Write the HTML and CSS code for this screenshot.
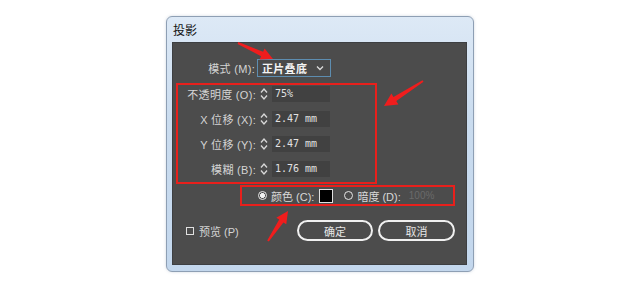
FILE: index.html
```html
<!DOCTYPE html>
<html lang="zh">
<head>
<meta charset="utf-8">
<link rel="stylesheet" href="styles.css">
</head>
<body>
<div class="window">
  <div class="title">投影</div>
  <div class="panel">
    <div class="mode-row">
      <span class="label mode-label">模式 (M):</span>
      <div class="select">
        <span class="select-text">正片叠底</span>
        <svg class="chev" width="8" height="6" viewBox="0 0 8 6"><path d="M1 1.5 L4 4.5 L7 1.5" fill="none" stroke="#dcdcdc" stroke-width="1.3"/></svg>
      </div>
    </div>
    <div class="box1">
      <div class="field">
        <span class="label">不透明度 (O):</span>
        <svg class="spin" width="10" height="16" viewBox="0 0 10 16"><path d="M2 6.5 L5 3 L8 6.5 M2 9.5 L5 13 L8 9.5" fill="none" stroke="#d8d8d8" stroke-width="1.3"/></svg>
        <div class="input">75%</div>
      </div>
      <div class="field">
        <span class="label">X 位移 (X):</span>
        <svg class="spin" width="10" height="16" viewBox="0 0 10 16"><path d="M2 6.5 L5 3 L8 6.5 M2 9.5 L5 13 L8 9.5" fill="none" stroke="#d8d8d8" stroke-width="1.3"/></svg>
        <div class="input">2.47 mm</div>
      </div>
      <div class="field">
        <span class="label">Y 位移 (Y):</span>
        <svg class="spin" width="10" height="16" viewBox="0 0 10 16"><path d="M2 6.5 L5 3 L8 6.5 M2 9.5 L5 13 L8 9.5" fill="none" stroke="#d8d8d8" stroke-width="1.3"/></svg>
        <div class="input">2.47 mm</div>
      </div>
      <div class="field">
        <span class="label">模糊 (B):</span>
        <svg class="spin" width="10" height="16" viewBox="0 0 10 16"><path d="M2 6.5 L5 3 L8 6.5 M2 9.5 L5 13 L8 9.5" fill="none" stroke="#d8d8d8" stroke-width="1.3"/></svg>
        <div class="input">1.76 mm</div>
      </div>
    </div>
    <div class="box2">
      <span class="radio on"></span>
      <span class="opt">颜色 (C):</span>
      <span class="swatch"></span>
      <span class="radio off"></span>
      <span class="opt">暗度 (D):</span>
      <span class="dim">100%</span>
    </div>
    <div class="bottom">
      <div class="check"><span class="cb"></span><span>预览 (P)</span></div>
      <div class="btn ok">确定</div>
      <div class="btn cancel">取消</div>
    </div>
  </div>
</div>
<svg class="arrows" width="620" height="289" viewBox="0 0 620 289">
  <polygon fill="#f01d1d" points="237.6,43.9 261.1,56.3 259.6,59.5 273,59 264.6,48.5 263.1,51.7 238.4,42.1"/>
  <polygon fill="#f01d1d" points="422.5,80.2 393.5,96.9 391.4,93.5 384,106 398.4,104.5 396.3,101.1 423.5,81.8"/>
  <polygon fill="#f01d1d" points="268.8,241.6 283.4,222.4 286.3,224.3 288,211 276.3,217.7 279.2,219.6 267.2,240.4"/>
</svg>
</body>
</html>
```

FILE: styles.css
```css
* { box-sizing: border-box; }
html, body { margin: 0; padding: 0; }
body {
  width: 620px;
  height: 289px;
  background: #ffffff;
  position: relative;
  overflow: hidden;
  font-family: "Liberation Sans", "Noto Sans CJK SC", sans-serif;
  font-size: 11px;
}
.window {
  margin: 16px 0 0 166px;
  width: 308px;
  height: 256px;
  border: 1px solid #8e9fb4;
  border-radius: 6px;
  background: linear-gradient(180deg, #dde9f6 0%, #cadcef 40%, #c3d7ed 100%);
  box-shadow: 0 0 3px rgba(120, 140, 170, 0.35);
}
.title {
  height: 25px;
  line-height: 25px;
  padding-left: 6px;
  font-size: 12px;
  color: #111;
  font-family: "Noto Sans CJK SC", sans-serif;
}
.panel {
  margin-left: 5px;
  width: 295px;
  height: 223px;
  background: #4c4c4c;
  border: 1px solid #3d3f42;
}
.label {
  color: #d4d4d4;
  text-align: right;
  white-space: nowrap;
  letter-spacing: 0.3px;
}
.mode-row {
  display: flex;
  align-items: center;
  padding-top: 16px;
  height: 34px;
}
.mode-label {
  width: 82px;
}
.select {
  margin-left: 2px;
  width: 74px;
  height: 18px;
  border: 1px solid #5d8db0;
  background: #4a4a4a;
  display: flex;
  align-items: center;
  padding-left: 4px;
}
.select-text {
  color: #f4f4f4;
  font-weight: bold;
  font-family: "Noto Sans CJK SC", sans-serif;
  font-size: 11px;
  letter-spacing: 0.3px;
}
.chev { margin-left: auto; margin-right: 6px; }
.box1 {
  margin-top: 6px;
  margin-left: 3px;
  width: 201px;
  height: 101px;
  border: 2px solid #e8201c;
  padding-top: 1px;
  display: flex;
  flex-direction: column;
  gap: 9px;
}
.field {
  display: flex;
  align-items: center;
  height: 16px;
}
.field .label { width: 78px; }
.spin { margin-left: 3px; flex: none; }
.input {
  margin-left: 3px;
  width: 58px;
  height: 16px;
  background: #414141;
  color: #e2e2e2;
  font-family: "DejaVu Sans Mono", monospace;
  font-size: 10px;
  line-height: 15px;
  padding-left: 3px;
}
.box2 {
  margin-top: 1px;
  margin-left: 67px;
  width: 215px;
  height: 21px;
  border: 2px solid #e8201c;
  display: flex;
  align-items: center;
  padding-left: 16px;
}
.radio {
  width: 9px;
  height: 9px;
  border-radius: 50%;
  border: 1.3px solid #e6e6e6;
  flex: none;
}
.radio.on {
  background: radial-gradient(circle, #f2f2f2 0 2.2px, #4c4c4c 2.6px);
}
.radio.off { margin-left: 11px; }
.opt {
  margin-left: 4px;
  color: #d8d8d8;
  white-space: nowrap;
}
.swatch {
  margin-left: 5px;
  width: 14px;
  height: 14px;
  background: #000;
  border: 1px solid #e0e0e0;
  flex: none;
}
.dim {
  margin-left: 8px;
  color: #6a6a6a;
  font-size: 10px;
}
.bottom {
  margin-top: 14px;
  display: flex;
  align-items: center;
  padding-left: 13px;
}
.check {
  width: 111px;
  display: flex;
  align-items: center;
  color: #d4d4d4;
}
.cb {
  width: 8px;
  height: 8px;
  border: 1px solid #e0e0e0;
  margin-right: 5px;
}
.btn {
  height: 21px;
  border: 2px solid #f0f0f0;
  border-radius: 11px;
  color: #e6e6e6;
  display: flex;
  align-items: center;
  justify-content: center;
  font-family: "Noto Sans CJK SC", sans-serif;
  font-size: 11px;
}
.ok { width: 76px; }
.cancel { width: 77px; margin-left: 5px; }
.arrows {
  position: absolute;
  left: 0;
  top: 0;
  pointer-events: none;
}
```
